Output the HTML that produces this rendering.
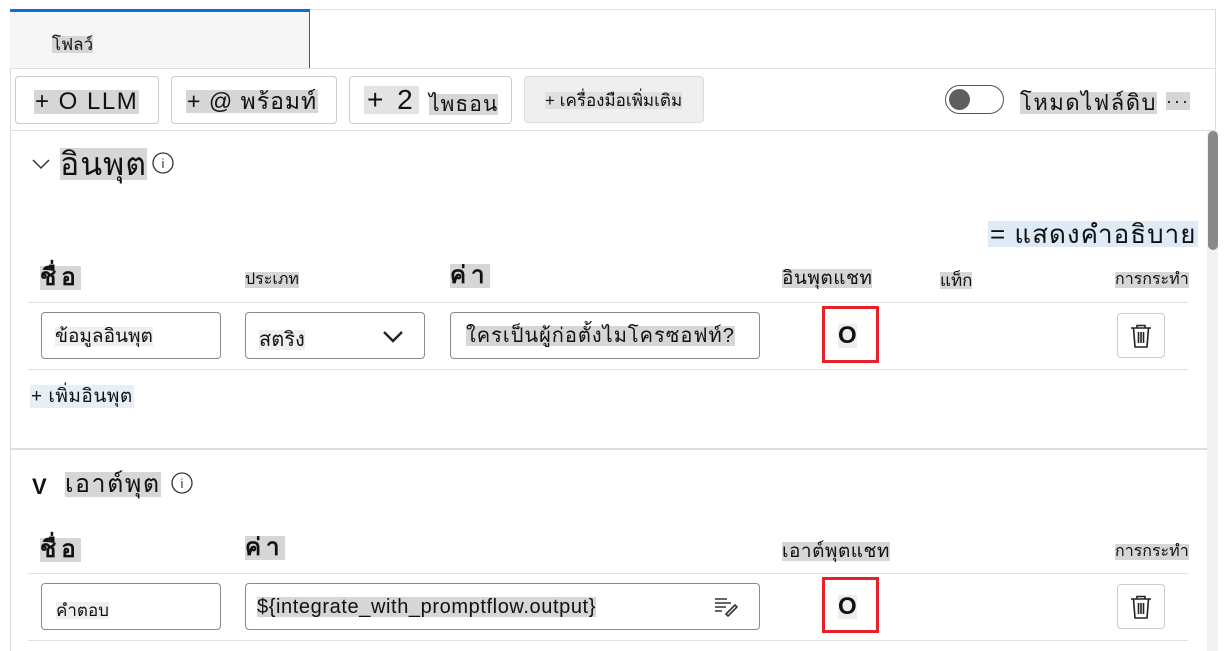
<!DOCTYPE html>
<html><head><meta charset="utf-8"><style>
*{box-sizing:border-box;margin:0;padding:0}
body{width:1231px;height:651px;background:#fff;position:relative;overflow:hidden;font-family:"Liberation Sans","Noto Sans CJK SC",sans-serif;color:#111}
.a{position:absolute}
.hl{background:#d6d6d6}
.box{position:absolute;border:1px solid #8a8a8a;border-radius:4px;background:#fff}
.btn{position:absolute;border:1px solid #ccc;border-radius:4px;background:#fff}
.line{position:absolute;height:1px;background:#e0e0e0}
.t{position:absolute;white-space:nowrap;line-height:1}
</style></head><body>
<div class="line" style="left:10px;top:9px;width:1206px"></div>
<div class="a" style="left:10px;top:9px;width:1px;height:642px;background:#ddd"></div>
<div class="a" style="left:1215px;top:9px;width:1px;height:642px;background:#ddd"></div>
<div class="a" style="left:10px;top:9px;width:300px;height:59px;background:#f6f6f6;border-top:3px solid #0f6cde;border-right:1px solid #555"></div>
<div class="t hl" style="left:52px;top:36px;font-size:17px">โฟลว์</div>
<div class="line" style="left:10px;top:68px;width:1206px"></div>
<div class="btn" style="left:15px;top:76px;width:144px;height:48px"></div>
<div class="t hl" style="left:34px;top:90px;font-size:24px;letter-spacing:1.5px;padding:0 1px">+ O LLM</div>
<div class="btn" style="left:171px;top:76px;width:166px;height:48px"></div>
<div class="t hl" style="left:186px;top:90px;font-size:23px;letter-spacing:1px;padding:0 1px">+ @ พร้อมท์</div>
<div class="btn" style="left:349px;top:76px;width:163px;height:48px"></div>
<div class="t" style="left:364px;top:86px;font-size:28px;background:#e3e3e3;padding:0 3px;letter-spacing:3px">+ 2</div>
<div class="t hl" style="left:429px;top:94px;font-size:21px;letter-spacing:1px">ไพธอน</div>
<div class="a" style="left:524px;top:76px;width:180px;height:47px;background:#efefef;border:1px solid #ddd;border-radius:4px"></div>
<div class="t" style="left:545px;top:92px;font-size:17px;background:#e0e0e0">+ เครื่องมือเพิ่มเติม</div>
<div class="a" style="left:945px;top:85px;width:59px;height:29px;border:1px solid #555;border-radius:15px"></div>
<div class="a" style="left:949px;top:89px;width:21px;height:21px;border-radius:50%;background:#5f5f5f"></div>
<div class="t hl" style="left:1020px;top:92px;font-size:22px;letter-spacing:1.5px">โหมดไฟล์ดิบ</div>
<div class="t hl" style="left:1166px;top:92px;font-size:18px;letter-spacing:2px">···</div>
<div class="line" style="left:10px;top:130px;width:1206px"></div>
<div class="a" style="left:1207px;top:131px;width:11px;height:520px;background:#f2f2f2"></div>
<div class="a" style="left:1208px;top:131px;width:10px;height:119px;background:#8a8a8a;border-radius:5px"></div>
<svg class="a" style="left:32px;top:158px" width="18" height="12"><path d="M1 2 L9 10 L17 2" fill="none" stroke="#333" stroke-width="1.5"/></svg>
<div class="t hl" style="left:60px;top:148px;font-size:32px;letter-spacing:1px">อินพุต</div>
<svg class="a" style="left:152px;top:152px" width="24" height="24"><circle cx="11" cy="11" r="10" fill="none" stroke="#333" stroke-width="1.3"/><text x="11" y="16" font-size="13" text-anchor="middle" fill="#333" font-family="Liberation Sans">i</text></svg>
<div class="t" style="left:988px;top:221px;font-size:26px;letter-spacing:1px;background:#deeaf6;padding:0 2px">= แสดงคำอธิบาย</div>
<div class="t hl" style="left:40px;top:266px;font-size:24px;font-weight:bold;letter-spacing:5px">ชื่อ</div>
<div class="t hl" style="left:245px;top:272px;font-size:16px">ประเภท</div>
<div class="t hl" style="left:450px;top:264px;font-size:24px;font-weight:bold;letter-spacing:5px">ค่า</div>
<div class="t hl" style="left:782px;top:269px;font-size:19px;letter-spacing:0.5px">อินพุตแชท</div>
<div class="t hl" style="left:940px;top:272px;font-size:17px">แท็ก</div>
<div class="t hl" style="left:1115px;top:272px;font-size:16px">การกระทำ</div>
<div class="line" style="left:28px;top:302px;width:1160px"></div>
<div class="box" style="left:41px;top:312px;width:180px;height:47px"></div>
<div class="t" style="left:55px;top:327px;font-size:19px;background:#eee">ข้อมูลอินพุต</div>
<div class="box" style="left:245px;top:312px;width:180px;height:47px"></div>
<div class="t" style="left:259px;top:330px;font-size:20px;background:#eee">สตริง</div>
<svg class="a" style="left:382px;top:330px" width="22" height="14"><path d="M2 2 L11 11 L20 2" fill="none" stroke="#222" stroke-width="2.4"/></svg>
<div class="box" style="left:450px;top:312px;width:310px;height:47px"></div>
<div class="t hl" style="left:466px;top:326px;font-size:20px;letter-spacing:1px">ใครเป็นผู้ก่อตั้งไมโครซอฟท์?</div>
<div class="a" style="left:822px;top:306px;width:57px;height:57px;border:3px solid #e8202a"></div>
<div class="t" style="left:838px;top:324px;font-size:24px;font-weight:bold;background:#eee">O</div>
<div class="btn" style="left:1117px;top:313px;width:48px;height:45px"></div>
<svg class="a" style="left:1128px;top:323px" width="26" height="26"><path d="M3 5 H23 M9 5 V2.5 H17 V5 M5.5 5 L7 24 H19 L20.5 5 M10.5 9 V20 M13 9 V20 M15.5 9 V20" fill="none" stroke="#222" stroke-width="1.6"/></svg>
<div class="line" style="left:28px;top:369px;width:1160px"></div>
<div class="t" style="left:30px;top:385px;font-size:19px;letter-spacing:0.5px;background:#e6eef8;padding:2px 1px">+ เพิ่มอินพุต</div>
<div class="a" style="left:10px;top:448px;width:1197px;height:2px;background:#ddd"></div>
<div class="t" style="left:32px;top:476px;font-size:22px;font-weight:bold">V</div>
<div class="t hl" style="left:65px;top:472px;font-size:25px;letter-spacing:1.5px">เอาต์พุต</div>
<svg class="a" style="left:171px;top:472px" width="24" height="24"><circle cx="11" cy="11" r="10" fill="none" stroke="#333" stroke-width="1.3"/><text x="11" y="16" font-size="13" text-anchor="middle" fill="#333" font-family="Liberation Sans">i</text></svg>
<div class="t hl" style="left:40px;top:538px;font-size:24px;font-weight:bold;letter-spacing:5px">ชื่อ</div>
<div class="t hl" style="left:245px;top:536px;font-size:24px;font-weight:bold;letter-spacing:5px">ค่า</div>
<div class="t hl" style="left:782px;top:542px;font-size:19px;letter-spacing:0.5px">เอาต์พุตแชท</div>
<div class="t hl" style="left:1115px;top:544px;font-size:16px">การกระทำ</div>
<div class="line" style="left:28px;top:573px;width:1160px"></div>
<div class="box" style="left:41px;top:583px;width:180px;height:47px"></div>
<div class="t" style="left:56px;top:602px;font-size:17px;background:#eee">คำตอบ</div>
<div class="box" style="left:245px;top:583px;width:515px;height:47px"></div>
<div class="t hl" style="left:257px;top:597px;font-size:20px;letter-spacing:0.6px">${integrate_with_promptflow.output}</div>
<svg class="a" style="left:713px;top:597px" width="26" height="20"><path d="M2 2H14 M2 6H18 M2 10H13 M2 14H9 M13 17 L22 8 L24 10 L15 19 Z" fill="none" stroke="#333" stroke-width="1.6"/></svg>
<div class="a" style="left:822px;top:577px;width:57px;height:56px;border:3px solid #e8202a"></div>
<div class="t" style="left:838px;top:595px;font-size:24px;font-weight:bold;background:#eee">O</div>
<div class="btn" style="left:1117px;top:584px;width:48px;height:45px"></div>
<svg class="a" style="left:1128px;top:594px" width="26" height="26"><path d="M3 5 H23 M9 5 V2.5 H17 V5 M5.5 5 L7 24 H19 L20.5 5 M10.5 9 V20 M13 9 V20 M15.5 9 V20" fill="none" stroke="#222" stroke-width="1.6"/></svg>
<div class="line" style="left:28px;top:640px;width:1160px"></div>
</body></html>
